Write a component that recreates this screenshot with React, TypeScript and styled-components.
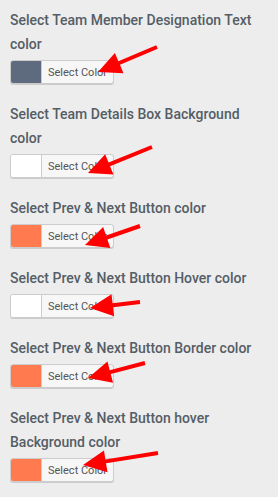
import React from 'react'
import styled, { createGlobalStyle } from 'styled-components'

const GlobalStyle = createGlobalStyle`
	html, body {
		margin: 0;
		padding: 0;
		background: #ededed;
	}
	body {
		font-family: Roboto, "Liberation Sans", Arial, sans-serif;
	}
`

const Page = styled.div`
	position: relative;
	width: 278px;
	min-height: 497px;
	padding: 8px 10px 0;
	box-sizing: border-box;
	background: #ededed;
`

const Field = styled.div`
	display: flex;
	flex-direction: column;
	align-items: flex-start;
	margin-bottom: 18px;
`

const Label = styled.div`
	font-size: 14px;
	font-weight: 500;
	line-height: 24px;
	color: #555d66;
	margin-bottom: 4px;
`

const PickerButton = styled.div`
	display: flex;
	height: 24px;
	width: 104px;
	box-sizing: border-box;
	border: 1px solid #ccc;
	border-radius: 3px;
	background: #f7f7f7;
	box-shadow: 0 1px 0 #ccc;
	overflow: hidden;
`

const Swatch = styled.span<{ $color: string }>`
	width: 30px;
	flex: none;
	background: ${(p) => p.$color};
	border-right: 1px solid #ccc;
`

const PickerText = styled.span`
	flex: 1;
	display: flex;
	align-items: center;
	padding-left: 6px;
	font-size: 11px;
	color: #555;
`

const Overlay = styled.svg`
	position: absolute;
	left: 0;
	top: 0;
	pointer-events: none;
`

type Pt = [number, number]

const fields = [
	{ label: 'Select Team Member Designation Text color', color: '#5e6a7d' },
	{ label: 'Select Team Details Box Background color', color: '#ffffff' },
	{ label: 'Select Prev & Next Button color', color: '#ff7a4f' },
	{ label: 'Select Prev & Next Button Hover color', color: '#ffffff' },
	{ label: 'Select Prev & Next Button Border color', color: '#ff7a4f' },
	{ label: 'Select Prev & Next Button hover Background color', color: '#ff7a4f' },
]

// tail, tip
const arrows: [Pt, Pt][] = [
	[[157, 47], [98, 72]],
	[[152, 147], [88, 173]],
	[[140, 226], [85, 245]],
	[[140, 302], [90, 308]],
	[[145, 363], [88, 378]],
	[[158, 453], [83, 465]],
]

function arrowPoints(tail: Pt, tip: Pt) {
	const dx = tail[0] - tip[0]
	const dy = tail[1] - tip[1]
	const len = Math.hypot(dx, dy)
	const ux = dx / len
	const uy = dy / len
	const nx = -uy
	const ny = ux
	const head = 23
	const hw = 11
	const sw = 2
	const bx = tip[0] + ux * head
	const by = tip[1] + uy * head
	const pts: Pt[] = [
		tip,
		[bx + nx * hw, by + ny * hw],
		[bx + nx * sw, by + ny * sw],
		[tail[0] + nx * sw, tail[1] + ny * sw],
		[tail[0] - nx * sw, tail[1] - ny * sw],
		[bx - nx * sw, by - ny * sw],
		[bx - nx * hw, by - ny * hw],
	]
	return pts.map((p) => p.join(',')).join(' ')
}

const App = () => {
	return (
		<Page>
			<GlobalStyle />
			{fields.map((f) => (
				<Field key={f.label}>
					<Label>{f.label}</Label>
					<PickerButton>
						<Swatch $color={f.color} />
						<PickerText>Select Color</PickerText>
					</PickerButton>
				</Field>
			))}
			<Overlay width="278" height="497">
				{arrows.map(([tail, tip], i) => (
					<polygon key={i} points={arrowPoints(tail, tip)} fill="#ff0000" />
				))}
			</Overlay>
		</Page>
	)
}

export default App
